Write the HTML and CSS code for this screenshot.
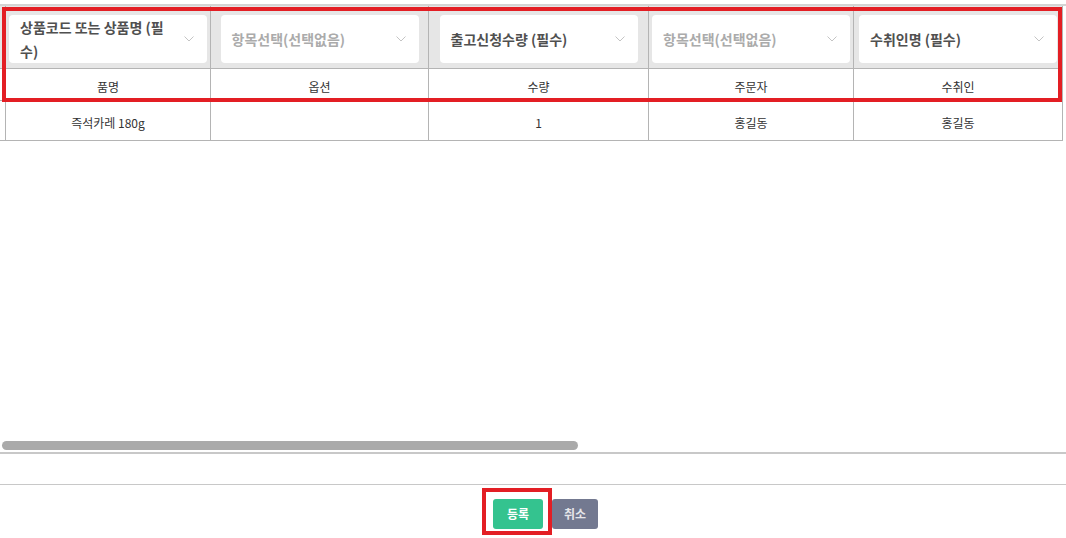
FILE: index.html
```html
<!DOCTYPE html>
<html>
<head lang="ko">
  <meta charset="UTF-8">
  <title>엑셀 항목 매칭</title>
  <link rel="stylesheet" href="styles.css">
</head>
<body>
<div class="page">
  <div class="grid-wrap">
    <div class="grid">
      <!-- 항목 선택 줄 -->
      <div class="cell head-cell"></div>
      <div class="cell head-cell">
        <div class="picker"><span class="picker-text">상품코드 또는 상품명 (필수)</span>
          <svg class="chev" width="10" height="6" viewBox="0 0 10 6"><polyline points="0.5,0.5 5,5 9.5,0.5"/></svg></div>
      </div>
      <div class="cell head-cell">
        <div class="picker"><span class="picker-text empty">항목선택(선택없음)</span>
          <svg class="chev" width="10" height="6" viewBox="0 0 10 6"><polyline points="0.5,0.5 5,5 9.5,0.5"/></svg></div>
      </div>
      <div class="cell head-cell">
        <div class="picker"><span class="picker-text">출고신청수량 (필수)</span>
          <svg class="chev" width="10" height="6" viewBox="0 0 10 6"><polyline points="0.5,0.5 5,5 9.5,0.5"/></svg></div>
      </div>
      <div class="cell head-cell">
        <div class="picker"><span class="picker-text empty">항목선택(선택없음)</span>
          <svg class="chev" width="10" height="6" viewBox="0 0 10 6"><polyline points="0.5,0.5 5,5 9.5,0.5"/></svg></div>
      </div>
      <div class="cell head-cell">
        <div class="picker"><span class="picker-text">수취인명 (필수)</span>
          <svg class="chev" width="10" height="6" viewBox="0 0 10 6"><polyline points="0.5,0.5 5,5 9.5,0.5"/></svg></div>
      </div>

      <!-- 엑셀 헤더 줄 -->
      <div class="cell label-cell"></div>
      <div class="cell label-cell">품명</div>
      <div class="cell label-cell">옵션</div>
      <div class="cell label-cell">수량</div>
      <div class="cell label-cell">주문자</div>
      <div class="cell label-cell">수취인</div>

      <!-- 데이터 줄 -->
      <div class="cell data-cell"></div>
      <div class="cell data-cell">즉석카레 180g</div>
      <div class="cell data-cell"></div>
      <div class="cell data-cell">1</div>
      <div class="cell data-cell">홍길동</div>
      <div class="cell data-cell">홍길동</div>
    </div>
    <div class="hscroll"><div class="hscroll-thumb"></div></div>
  </div>

  <div class="gap"></div>

  <div class="footer">
    <span class="btn-mark"><a href="javascript:void(0);" class="btn btn-ok">등록</a></span>
    <a href="javascript:void(0);" class="btn btn-cancel">취소</a>
  </div>

  <div class="head-mark"></div><!--강조 표시-->
</div>
</body>
</html>
```

FILE: styles.css
```css
body {
  margin: 0;
  padding: 0;
  background: #ffffff;
  font-family: "Noto Sans CJK KR", "Noto Sans", sans-serif;
  color: #333333;
}

a {
  text-decoration: none;
}

.page {
  position: relative;
  width: 1066px;
  height: 538px;
  padding-top: 4px;
  box-sizing: border-box;
  overflow: hidden;
}

.grid-wrap {
  height: 446px;
  border-top: 2px solid #d4d4d4;
  border-bottom: 2px solid #c8c8c8;
  display: flex;
  flex-direction: column;
}

.grid {
  display: grid;
  grid-template-columns: 6px 205px 218px 220px 205px 209px;
  grid-template-rows: 63px 32px 40px;
}

.cell {
  border-right: 1px solid #b4b4b4;
  border-bottom: 1px solid #b4b4b4;
  display: flex;
  align-items: center;
  justify-content: center;
  font-size: 12px;
  color: #333333;
}

.head-cell {
  background: #e6e6e6;
  align-items: flex-start;
  padding-top: 9px;
}

.label-cell {
  padding-top: 3px;
}

.data-cell {
  padding-top: 4px;
}

.picker {
  position: relative;
  width: 198px;
  min-height: 48px;
  box-sizing: border-box;
  padding: 0 28px 0 11px;
  background: #ffffff;
  border-radius: 4px;
  display: flex;
  align-items: center;
}

.picker-text {
  font-size: 14px;
  font-weight: bold;
  line-height: 24px;
  color: #505050;
}

.picker-text.empty {
  color: #ababab;
}

.chev {
  position: absolute;
  right: 13px;
  top: 21px;
}

.chev polyline {
  fill: none;
  stroke: #c4c4c4;
  stroke-width: 1;
}

.hscroll {
  margin-top: auto;
  height: 12px;
  padding: 1px 0 0 2px;
  box-sizing: border-box;
}

.hscroll-thumb {
  width: 576px;
  height: 9px;
  border-radius: 5px;
  background: #aaaaaa;
}

.gap {
  height: 30px;
}

.footer {
  border-top: 1px solid #c8c8c8;
  padding: 14px 0 0 25px;
  display: flex;
  justify-content: center;
  gap: 9px;
}

.btn {
  display: block;
  height: 30px;
  line-height: 30px;
  border-radius: 3px;
  font-size: 12px;
  font-weight: bold;
  text-align: center;
}

.btn-ok {
  width: 50px;
  background: #34c38f;
  color: #ffffff;
}

.btn-cancel {
  width: 46px;
  background: #737990;
  color: #e6e6ea;
}

.btn-mark {
  position: relative;
  display: block;
}

.btn-mark::after {
  content: "";
  position: absolute;
  left: -11px;
  top: -11px;
  right: -9px;
  bottom: -6px;
  border: 4px solid #e31e24;
}

.head-mark {
  position: absolute;
  left: 2px;
  top: 7px;
  width: 1060px;
  height: 95px;
  box-sizing: border-box;
  border: 4px solid #e31e24;
}
```
